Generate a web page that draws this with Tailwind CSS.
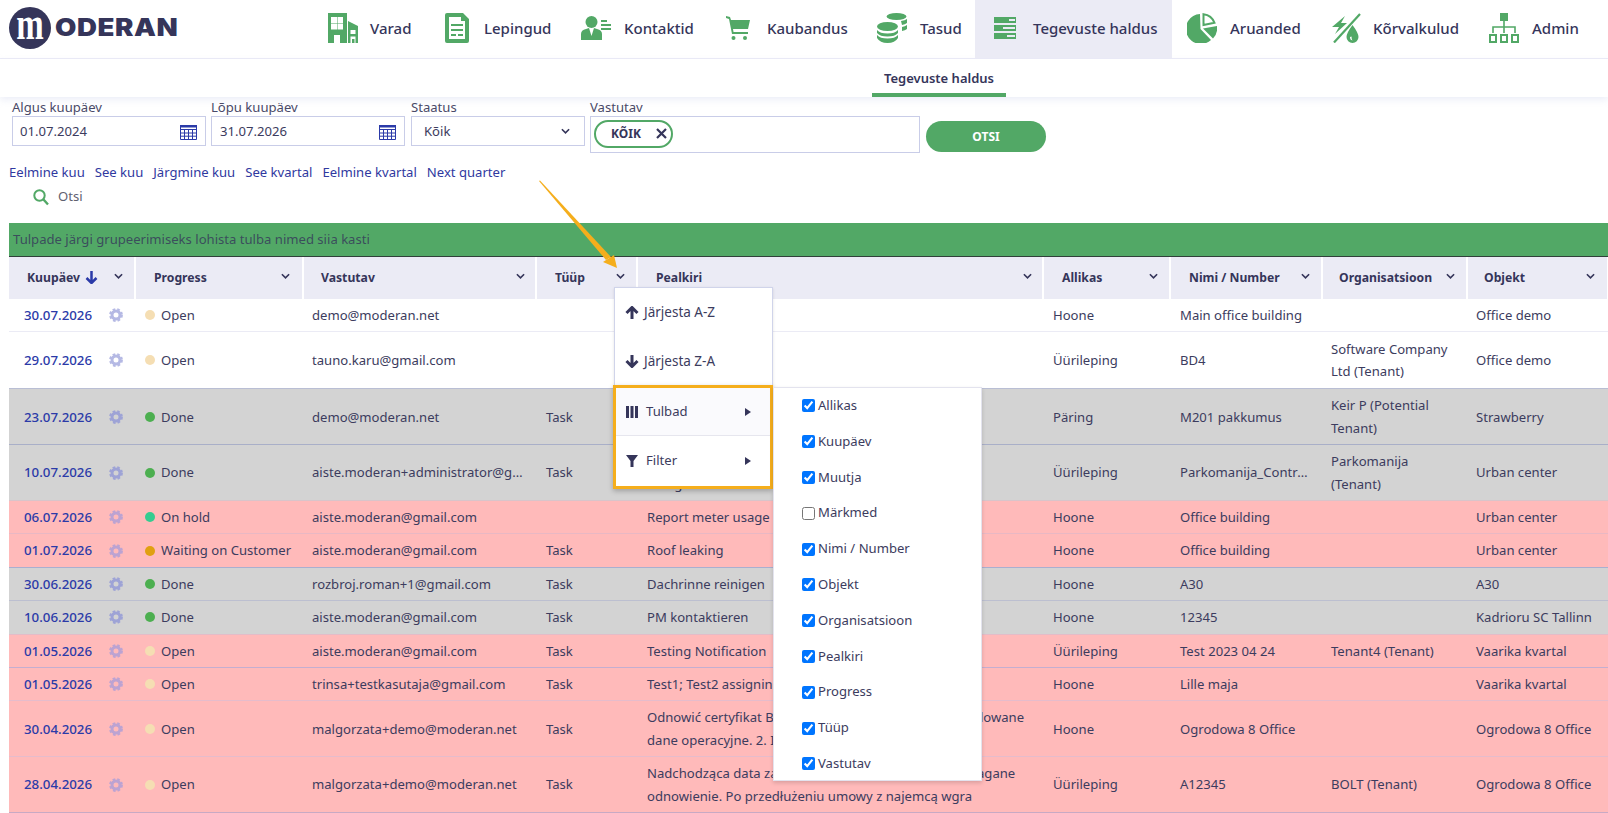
<!DOCTYPE html>
<html lang="et">
<head>
    <meta charset="UTF-8">
    <title>Moderan - Tegevuste haldus</title>
    <script src="https://cdn.jsdelivr.net/npm/@tailwindcss/browser@4"></script>
</head>
<body class="bg-white font-['Noto_Sans',sans-serif] text-[13.100px] text-[#3c3c5e]">
    <svg class="hidden">
        <symbol id="gear" viewBox="0 0 14 14">
            <circle cx="7" cy="7" r="4" fill="none" stroke="currentColor" stroke-width="3"/>
            <circle cx="7" cy="7" r="5.8" fill="none" stroke="currentColor" stroke-width="2.2" stroke-dasharray="2.6 2.05"/>
        </symbol>
        <symbol id="chev" viewBox="0 0 10 6">
            <path d="M1 1l4 4 4-4" fill="none" stroke="currentColor" stroke-width="1.8"/>
        </symbol>
        <symbol id="cal" viewBox="0 0 17 15">
            <path d="M.5.5h16v14H.5zM.5 4.5h16M.5 8h16M.5 11.2h16M4.5 4.5v10M8.5 4.5v10M12.5 4.5v10" fill="none" stroke="currentColor"/>
            <path d="M0 0h17v2.5H0z" fill="currentColor"/>
        </symbol>
        <symbol id="caret" viewBox="0 0 6 8"><path d="M0 0l6 4-6 4z" fill="currentColor"/></symbol>
    </svg>

    <div class="relative h-[813px] overflow-hidden">
        <!-- top nav -->
        <nav class="flex h-[59px] border-b border-[#ebebf7] pb-[2px] text-[15px] font-medium text-[#35355a]">
            <div class="flex w-[309px] items-center pl-[9px]">
                <div class="flex h-[42px] w-[42px] shrink-0 items-center justify-center rounded-full bg-[#35355a] font-['Liberation_Serif',serif] text-[33px] font-bold text-white">
                    <span class="-mt-[8px] scale-y-[1.4] leading-none">m</span>
                </div>
                <span class="ml-[4px] origin-left scale-x-[1.15] font-['Inter',sans-serif] text-[24px] font-black tracking-[0.5px]">ODERAN</span>
            </div>
            <a class="flex w-[117px] items-center pl-[19px]">
                <svg class="mr-[12px] shrink-0 text-[#52a866]" width="30" height="30" viewBox="0 0 30 30" fill="currentColor">
                    <path fill-rule="evenodd" d="M0 0h19v30h-7v-8H6v8H0zM3 4v6h6V4zm6.500 0v6H15V4zM3 10.500v6h6v-6zm6.500 0v6H15v-6z"/>
                    <path fill-rule="evenodd" d="M20 8l10 5v17H20zm2.500 9v4h5v-4zm0 6.500V30h1.500v-4h2.500v4h1v-6.500z"/>
                </svg>
                Varad
            </a>
            <a class="flex w-[136px] items-center pl-[19px]">
                <svg class="mr-[15px] shrink-0 text-[#52a866]" width="24" height="30" viewBox="0 0 24 30" fill="currentColor">
                    <path fill-rule="evenodd" d="M2 0h16l6 6v22a2 2 0 0 1-2 2H2a2 2 0 0 1-2-2V2a2 2 0 0 1 2-2zm2 4v22h16V8h-4V4z"/>
                    <path d="M6 11h12v2H6zM6 16h12v2H6zM6 21h5v2H6zM13 21h5v2h-5z"/>
                </svg>
                Lepingud
            </a>
            <a class="flex w-[145px] items-center pl-[19px]">
                <svg class="mr-[13px] shrink-0 text-[#52a866]" width="30" height="24" viewBox="0 0 30 24" fill="currentColor">
                    <circle cx="10.500" cy="6" r="6"/>
                    <path d="M0 24v-6q0-4 5-5l3-1 2.500 8 2.500-8 3 1q5 1 5 5v6z"/>
                    <path d="M20 4h6v2h-6zM20 8h10v2H20zM20 12h10v2H20z"/>
                </svg>
                Kontaktid
            </a>
            <a class="flex w-[151px] items-center pl-[19px]">
                <svg class="mr-[17px] shrink-0 text-[#52a866]" width="24" height="24" viewBox="0 0 24 24" fill="currentColor">
                    <path d="M0 0l4 1 1 3h19l-2 9H7l.5 3H22v2H6L3 3 0 2z"/>
                    <circle cx="7.500" cy="22" r="2"/><circle cx="19" cy="22" r="2"/>
                </svg>
                Kaubandus
            </a>
            <a class="flex w-[117px] items-center pl-[19px]">
                <svg class="mr-[13px] shrink-0 text-[#52a866]" width="30" height="30" viewBox="0 0 30 30" fill="currentColor">
                    <ellipse cx="19.500" cy="3.500" rx="10" ry="3.500"/>
                    <path d="M24 8q4-.5 6-2v4q-2 1.500-5 2zM25 14q3-.5 5-2v4q-2 1.500-5 2z"/>
                    <ellipse cx="10.500" cy="13.500" rx="10.500" ry="4.500"/>
                    <path d="M0 17q3 3.500 10.500 3.500T21 17v3q-3 3.500-10.500 3.500T0 20zM0 22q3 3.500 10.500 3.500T21 22v3q-3 5-10.500 5T0 25z"/>
                </svg>
                Tasud
            </a>
            <a class="flex h-[58px] w-[197px] items-center bg-[#ebebf5] pb-[2px] pl-[19px]">
                <svg class="mr-[17px] shrink-0 text-[#52a866]" width="22" height="22" viewBox="0 0 22 22" fill="currentColor">
                    <path fill-rule="evenodd" d="M0 0h22v6H0zm15 2v2h6V2zM0 8h22v6H0zm9 2v2h12v-2zM0 16h22v6H0zm13 2v2h8v-2z"/>
                </svg>
                Tegevuste haldus
            </a>
            <a class="flex w-[140px] items-center pl-[15px]">
                <svg class="mr-[13px] shrink-0 text-[#52a866]" width="30" height="30" viewBox="0 0 30 30" fill="currentColor">
                    <path d="M13 1A15 15 0 1 0 24 27L13.500 16z"/>
                    <path d="M16 15.500L30 13a15 15 0 0 1-4 12.500z"/>
                    <path d="M16.500 1.200A13.500 13.500 0 0 1 27.500 9.800L16.500 12z" fill="none" stroke="currentColor" stroke-width="2"/>
                </svg>
                Aruanded
            </a>
            <a class="flex w-[158px] items-center pl-[19px]">
                <svg class="mr-[12px] shrink-0 text-[#52a866]" width="30" height="30" viewBox="0 0 30 30" fill="currentColor">
                    <path d="M3 29.500L29 1" fill="none" stroke="currentColor" stroke-width="2.200"/>
                    <path d="M14 3L1 14h7l-4 7 12-11h-6z"/>
                    <path fill-rule="evenodd" d="M21.500 12q6 8 6 12a6 6 0 0 1-12 0q0-4 6-12zm-2.500 12q0 3 2.500 3.500-1-1-1-4z"/>
                </svg>
                Kõrvalkulud
            </a>
            <a class="flex items-center pl-[19px]">
                <svg class="mr-[13px] shrink-0 text-[#52a866]" width="30" height="30" viewBox="0 0 30 30" fill="currentColor">
                    <path d="M11 0h8v8h-8z"/>
                    <path d="M15 8v12M4 20v-6h22v6" fill="none" stroke="currentColor" stroke-width="1.600"/>
                    <path d="M1 22h6v7H1zM12 22h6v7h-6zM23 22h6v7h-6z" fill="none" stroke="currentColor" stroke-width="2"/>
                </svg>
                Admin
            </a>
        </nav>

        <!-- sub nav -->
        <div class="flex h-[38px] justify-center pl-[270px] shadow-[0_3px_7px_rgba(200,205,235,0.35)]">
            <a class="flex h-[38px] w-[134px] items-center justify-center border-b-[4px] border-[#52a866] pt-[5px] text-[13px] font-semibold text-[#35355a]">Tegevuste haldus</a>
        </div>

        <!-- filters -->
        <div class="relative flex items-start pl-[12px] pt-[1px]">
            <div class="mr-[5px] w-[194px]">
                <label class="block h-[18px] leading-[18px] text-[#4a4a68]">Algus kuupäev</label>
                <div class="flex h-[30px] items-center justify-between border border-[#c9cde8] pl-[7px] pr-[8px] pt-[2px]">
                    01.07.2024
                    <svg class="text-[#2b3aa8]" width="17" height="15"><use href="#cal"/></svg>
                </div>
            </div>
            <div class="mr-[6px] w-[194px]">
                <label class="block h-[18px] leading-[18px] text-[#4a4a68]">Lõpu kuupäev</label>
                <div class="flex h-[30px] items-center justify-between border border-[#c9cde8] pl-[8px] pr-[8px] pt-[2px]">
                    31.07.2026
                    <svg class="text-[#2b3aa8]" width="17" height="15"><use href="#cal"/></svg>
                </div>
            </div>
            <div class="mr-[5px] w-[174px]">
                <label class="block h-[18px] leading-[18px] text-[#4a4a68]">Staatus</label>
                <div class="flex h-[30px] items-center justify-between border border-[#c9cde8] pl-[12px] pr-[14px] pt-[2px]">
                    Kõik
                    <svg class="-mt-[3px] text-[#35355a]" width="9" height="6"><use href="#chev"/></svg>
                </div>
            </div>
            <div class="mr-[6px] w-[330px]">
                <label class="block h-[18px] leading-[18px] text-[#4a4a68]">Vastutav</label>
                <div class="flex h-[37px] items-start border border-[#c9cde8] pl-[3px] pt-[3px]">
                    <span class="flex h-[28px] w-[79px] items-center rounded-full border-2 border-[#52a866] pl-[15px] text-[12px] font-bold text-[#35355a]">
                        KÕIK
                        <svg class="-mt-[2px] ml-[15px]" width="11" height="11" viewBox="0 0 11 11"><path d="M1 1l9 9M10 1l-9 9" stroke="currentColor" stroke-width="2.200"/></svg>
                    </span>
                </div>
            </div>
            <button class="mt-[23px] flex h-[31px] w-[120px] items-center justify-center rounded-full bg-[#52a866] text-[12px] font-bold text-white">OTSI</button>
        </div>

        <div class="mt-[10px] flex h-[20px] items-center gap-[10px] pl-[9px] text-[#3039a0]">
            <a>Eelmine kuu</a><a>See kuu</a><a>Järgmine kuu</a><a>See kvartal</a><a>Eelmine kvartal</a><a>Next quarter</a>
        </div>
        <div class="mt-[4px] flex h-[20px] items-center pl-[33px] text-[#5f5f70]">
            <svg class="mr-[9px] text-[#52a866]" width="16" height="17" viewBox="0 0 16 17" fill="none" stroke="currentColor"><circle cx="6.500" cy="6.500" r="5.200" stroke-width="2"/><path d="M10.500 10.500l4.500 5" stroke-width="2.400"/></svg>
            Otsi
        </div>

        <!-- group bar -->
        <div class="ml-[9px] mt-[16px] flex h-[34px] items-center border-b border-[#30403a] bg-[#52a866] pl-[4px] text-[#35355a]/80">
            Tulpade järgi grupeerimiseks lohista tulba nimed siia kasti
        </div>

        <!-- grid -->
        <table class="ml-[9px] w-[1599px] table-fixed">
            <colgroup>
                <col class="w-[126px]"><col class="w-[168px]"><col class="w-[233px]"><col class="w-[101px]"><col class="w-[406px]"><col class="w-[127px]"><col class="w-[152px]"><col class="w-[145px]"><col class="w-[141px]">
            </colgroup>
            <thead class="text-[12.200px] font-bold text-[#35355a]">
                <tr class="h-[42px] bg-[#ebebf5]">
                    <th class="border-r-2 border-white pl-[18px] text-left">
                        <div class="flex items-center">Kuupäev
                            <svg class="ml-[5px] text-[#2b3aa8]" width="13" height="13" viewBox="0 0 13 13" fill="none" stroke="currentColor" stroke-width="2.500"><path d="M6.500 0v12M1.500 7l5 5 5-5"/></svg>
                            <svg class="-mt-[3px] ml-[16px]" width="9" height="6"><use href="#chev"/></svg>
                        </div>
                    </th>
                    <th class="border-r-2 border-white pl-[18px] pr-[12px] text-left"><div class="flex items-center justify-between">Progress<svg class="-mt-[3px]" width="9" height="6"><use href="#chev"/></svg></div></th>
                    <th class="border-r-2 border-white pl-[17px] pr-[10px] text-left"><div class="flex items-center justify-between">Vastutav<svg class="-mt-[3px]" width="9" height="6"><use href="#chev"/></svg></div></th>
                    <th class="border-r-2 border-white pl-[18px] pr-[11px] text-left"><div class="flex items-center justify-between">Tüüp<svg class="-mt-[3px]" width="9" height="6"><use href="#chev"/></svg></div></th>
                    <th class="border-r-2 border-white pl-[18px] pr-[10px] text-left"><div class="flex items-center justify-between">Pealkiri<svg class="-mt-[3px]" width="9" height="6"><use href="#chev"/></svg></div></th>
                    <th class="border-r-2 border-white pl-[18px] pr-[11px] text-left"><div class="flex items-center justify-between">Allikas<svg class="-mt-[3px]" width="9" height="6"><use href="#chev"/></svg></div></th>
                    <th class="border-r-2 border-white pl-[18px] pr-[11px] text-left"><div class="flex items-center justify-between">Nimi / Number<svg class="-mt-[3px]" width="9" height="6"><use href="#chev"/></svg></div></th>
                    <th class="border-r-2 border-white pl-[16px] pr-[11px] text-left"><div class="flex items-center justify-between">Organisatsioon<svg class="-mt-[3px]" width="9" height="6"><use href="#chev"/></svg></div></th>
                    <th class="border-r-2 border-white pl-[16px] pr-[12px] text-left"><div class="flex items-center justify-between">Objekt<svg class="-mt-[3px]" width="9" height="6"><use href="#chev"/></svg></div></th>
                </tr>
            </thead>
            <tbody class="leading-[22.400px] [&_td]:truncate [&_td]:py-[5px] [&_td]:pl-[10px] [&_td]:pr-[10px] [&_td:first-child]:pr-[12px] [&_td:nth-child(8)]:pl-[9px] [&_td:nth-child(9)]:pl-[9px]">
                <tr class="border-b border-[#ebebf5] bg-white">
                    <td class="!pl-[15px]"><div class="flex items-center justify-between text-[13.300px] font-medium text-[#2b3aa8]">30.07.2026<svg class="text-[#b5b9e4]" width="14" height="14"><use href="#gear"/></svg></div></td>
                    <td><div class="flex items-center"><span class="mr-[6px] h-[10px] w-[10px] rounded-full bg-[#f5deb3]"></span>Open</div></td>
                    <td class="!pl-[9px]">demo@moderan.net</td><td></td><td>Test</td><td>Hoone</td><td>Main office building</td><td></td><td>Office demo</td>
                </tr>
                <tr class="h-[57px] border-b border-[#b9bed4] bg-white">
                    <td class="!pl-[15px]"><div class="flex items-center justify-between text-[13.300px] font-medium text-[#2b3aa8]">29.07.2026<svg class="text-[#b5b9e4]" width="14" height="14"><use href="#gear"/></svg></div></td>
                    <td><div class="flex items-center"><span class="mr-[6px] h-[10px] w-[10px] rounded-full bg-[#f5deb3]"></span>Open</div></td>
                    <td class="!pl-[9px]">tauno.karu@gmail.com</td><td></td><td>Lease</td><td>Üürileping</td><td>BD4</td><td class="!whitespace-normal">Software Company Ltd (Tenant)</td><td>Office demo</td>
                </tr>
                <tr class="border-b border-[#a9afc8] bg-[#d3d3d3]">
                    <td class="!pl-[15px]"><div class="flex items-center justify-between text-[13.300px] font-medium text-[#2b3aa8]">23.07.2026<svg class="text-[#9ea3d6]" width="14" height="14"><use href="#gear"/></svg></div></td>
                    <td><div class="flex items-center"><span class="mr-[6px] h-[10px] w-[10px] rounded-full bg-[#4caf50]"></span>Done</div></td>
                    <td class="!pl-[9px]">demo@moderan.net</td><td>Task</td><td>M201</td><td>Päring</td><td>M201 pakkumus</td><td class="!whitespace-normal">Keir P (Potential Tenant)</td><td>Strawberry</td>
                </tr>
                <tr class="border-b border-[#d9c4ca] bg-[#d3d3d3]">
                    <td class="!pl-[15px]"><div class="flex items-center justify-between text-[13.300px] font-medium text-[#2b3aa8]">10.07.2026<svg class="text-[#9ea3d6]" width="14" height="14"><use href="#gear"/></svg></div></td>
                    <td><div class="flex items-center"><span class="mr-[6px] h-[10px] w-[10px] rounded-full bg-[#4caf50]"></span>Done</div></td>
                    <td class="!pl-[9px]">aiste.moderan+administrator@gmail.com</td><td>Task</td><td class="!whitespace-normal">Contract<br>Using</td><td>Üürileping</td><td class="!pr-[14px]">Parkomanija_Contract</td><td class="!whitespace-normal">Parkomanija (Tenant)</td><td>Urban center</td>
                </tr>
                <tr class="border-b border-[#e8b8c4] bg-[#ffbaba]">
                    <td class="!pl-[15px]"><div class="flex items-center justify-between text-[13.300px] font-medium text-[#2b3aa8]">06.07.2026<svg class="text-[#bca3d2]" width="14" height="14"><use href="#gear"/></svg></div></td>
                    <td><div class="flex items-center"><span class="mr-[6px] h-[10px] w-[10px] rounded-full bg-[#35cc90]"></span>On hold</div></td>
                    <td class="!pl-[9px]">aiste.moderan@gmail.com</td><td></td><td>Report meter usage</td><td>Hoone</td><td>Office building</td><td></td><td>Urban center</td>
                </tr>
                <tr class="border-b border-[#a9afd0] bg-[#ffbaba]">
                    <td class="!pl-[15px]"><div class="flex items-center justify-between text-[13.300px] font-medium text-[#2b3aa8]">01.07.2026<svg class="text-[#bca3d2]" width="14" height="14"><use href="#gear"/></svg></div></td>
                    <td><div class="flex items-center whitespace-nowrap"><span class="mr-[6px] h-[10px] w-[10px] shrink-0 rounded-full bg-[#e0a010]"></span>Waiting on Customer</div></td>
                    <td class="!pl-[9px]">aiste.moderan@gmail.com</td><td>Task</td><td>Roof leaking</td><td>Hoone</td><td>Office building</td><td></td><td>Urban center</td>
                </tr>
                <tr class="border-b border-[#bcbfd0] bg-[#d3d3d3]">
                    <td class="!pl-[15px]"><div class="flex items-center justify-between text-[13.300px] font-medium text-[#2b3aa8]">30.06.2026<svg class="text-[#9ea3d6]" width="14" height="14"><use href="#gear"/></svg></div></td>
                    <td><div class="flex items-center"><span class="mr-[6px] h-[10px] w-[10px] rounded-full bg-[#4caf50]"></span>Done</div></td>
                    <td class="!pl-[9px]">rozbroj.roman+1@gmail.com</td><td>Task</td><td>Dachrinne reinigen</td><td>Hoone</td><td>A30</td><td></td><td>A30</td>
                </tr>
                <tr class="border-b border-[#e3bcc8] bg-[#d3d3d3]">
                    <td class="!pl-[15px]"><div class="flex items-center justify-between text-[13.300px] font-medium text-[#2b3aa8]">10.06.2026<svg class="text-[#9ea3d6]" width="14" height="14"><use href="#gear"/></svg></div></td>
                    <td><div class="flex items-center"><span class="mr-[6px] h-[10px] w-[10px] rounded-full bg-[#4caf50]"></span>Done</div></td>
                    <td class="!pl-[9px]">aiste.moderan@gmail.com</td><td>Task</td><td>PM kontaktieren</td><td>Hoone</td><td>12345</td><td></td><td>Kadrioru SC Tallinn</td>
                </tr>
                <tr class="border-b border-[#c4aed0] bg-[#ffbaba]">
                    <td class="!pl-[15px]"><div class="flex items-center justify-between text-[13.300px] font-medium text-[#2b3aa8]">01.05.2026<svg class="text-[#bca3d2]" width="14" height="14"><use href="#gear"/></svg></div></td>
                    <td><div class="flex items-center"><span class="mr-[6px] h-[10px] w-[10px] rounded-full bg-[#f5deb3]"></span>Open</div></td>
                    <td class="!pl-[9px]">aiste.moderan@gmail.com</td><td>Task</td><td>Testing Notification</td><td>Üürileping</td><td>Test 2023 04 24</td><td>Tenant4 (Tenant)</td><td>Vaarika kvartal</td>
                </tr>
                <tr class="border-b border-[#e5bccc] bg-[#ffbaba]">
                    <td class="!pl-[15px]"><div class="flex items-center justify-between text-[13.300px] font-medium text-[#2b3aa8]">01.05.2026<svg class="text-[#bca3d2]" width="14" height="14"><use href="#gear"/></svg></div></td>
                    <td><div class="flex items-center"><span class="mr-[6px] h-[10px] w-[10px] rounded-full bg-[#f5deb3]"></span>Open</div></td>
                    <td class="!pl-[9px]">trinsa+testkasutaja@gmail.com</td><td>Task</td><td>Test1; Test2 assigning</td><td>Hoone</td><td>Lille maja</td><td></td><td>Vaarika kvartal</td>
                </tr>
                <tr class="border-b border-[#e5bccc] bg-[#ffbaba]">
                    <td class="!pl-[15px]"><div class="flex items-center justify-between text-[13.300px] font-medium text-[#2b3aa8]">30.04.2026<svg class="text-[#bca3d2]" width="14" height="14"><use href="#gear"/></svg></div></td>
                    <td><div class="flex items-center"><span class="mr-[6px] h-[10px] w-[10px] rounded-full bg-[#f5deb3]"></span>Open</div></td>
                    <td class="!pl-[9px]">malgorzata+demo@moderan.net</td><td>Task</td><td>Odnowić certyfikat BMS. 1. Utracone zostaną też zakodowane<br>dane operacyjne. 2. Inne</td><td>Hoone</td><td>Ogrodowa 8 Office</td><td></td><td>Ogrodowa 8 Office</td>
                </tr>
                <tr class="border-b border-[#c8a9c4] bg-[#ffbaba]">
                    <td class="!pl-[15px]"><div class="flex items-center justify-between text-[13.300px] font-medium text-[#2b3aa8]">28.04.2026<svg class="text-[#bca3d2]" width="14" height="14"><use href="#gear"/></svg></div></td>
                    <td><div class="flex items-center"><span class="mr-[6px] h-[10px] w-[10px] rounded-full bg-[#f5deb3]"></span>Open</div></td>
                    <td class="!pl-[9px]">malgorzata+demo@moderan.net</td><td>Task</td><td>Nadchodząca data zakończenia obecnej umowy. Wymagane<br>odnowienie. Po przedłużeniu umowy z najemcą wgra</td><td>Üürileping</td><td>A12345</td><td>BOLT (Tenant)</td><td>Ogrodowa 8 Office</td>
                </tr>
            </tbody>
        </table>

        <!-- annotation arrow -->
        <svg class="absolute left-[530px] top-[175px] z-30" width="100" height="100" viewBox="0 0 100 100" fill="#f5ae1c">
            <path d="M9 6l1-.6L81 82l-5 3z"/>
            <path d="M73 87l11-7 3 13z"/>
        </svg>

        <!-- column menu -->
        <div class="absolute left-[614px] top-[287px] z-10 h-[100px] w-[159px] border border-[#d0d4ea] bg-white text-[13.500px] shadow-sm">
            <div class="flex h-[49px] items-center pl-[10px]">
                <svg class="mr-[5px]" width="14" height="13" viewBox="0 0 14 13" fill="none" stroke="#35355a" stroke-width="3"><path d="M7 13V2M1.500 7L7 1.500 12.500 7"/></svg>
                Järjesta A-Z
            </div>
            <div class="flex h-[49px] items-center pl-[10px]">
                <svg class="mr-[5px]" width="14" height="13" viewBox="0 0 14 13" fill="none" stroke="#35355a" stroke-width="3"><path d="M7 0v11M1.500 6L7 11.500 12.500 6"/></svg>
                Järjesta Z-A
            </div>
        </div>
        <div class="absolute left-[613px] top-[385px] z-20 w-[160px] border-[3px] border-[#f5ae1c] bg-white shadow-[0_2px_5px_rgba(0,0,0,0.25)]">
            <div class="flex h-[48px] items-center border-b border-[#e6e6ee] bg-[#fafafd] pl-[10px] pr-[19px]">
                <svg class="mr-[8px]" width="12" height="12" viewBox="0 0 12 12" fill="#35355a"><path d="M0 0h3v12H0zM4.500 0h3v12h-3zM9 0h3v12H9z"/></svg>
                <span class="flex-1">Tulbad</span>
                <svg class="text-[#35355a]" width="6" height="8"><use href="#caret"/></svg>
            </div>
            <div class="flex h-[50px] items-center pl-[10px] pr-[19px]">
                <svg class="mr-[8px]" width="12" height="12" viewBox="0 0 12 12" fill="#35355a"><path d="M0 0h12L7.500 6v6h-3V6z"/></svg>
                <span class="flex-1">Filter</span>
                <svg class="text-[#35355a]" width="6" height="8"><use href="#caret"/></svg>
            </div>
        </div>
        <div class="absolute left-[773px] top-[387px] z-20 flex h-[394px] w-[209px] flex-col overflow-hidden border border-[#e3e3ee] bg-white pl-[28px] shadow-[0_2px_4px_rgba(0,0,0,0.15)]">
            <label class="flex h-[35.800px] shrink-0 items-center gap-[3px]"><input type="checkbox" checked class="accent-[#0075ff]">Allikas</label>
            <label class="flex h-[35.800px] shrink-0 items-center gap-[3px]"><input type="checkbox" checked class="accent-[#0075ff]">Kuupäev</label>
            <label class="flex h-[35.800px] shrink-0 items-center gap-[3px]"><input type="checkbox" checked class="accent-[#0075ff]">Muutja</label>
            <label class="flex h-[35.800px] shrink-0 items-center gap-[3px]"><input type="checkbox" class="accent-[#0075ff]">Märkmed</label>
            <label class="flex h-[35.800px] shrink-0 items-center gap-[3px]"><input type="checkbox" checked class="accent-[#0075ff]">Nimi / Number</label>
            <label class="flex h-[35.800px] shrink-0 items-center gap-[3px]"><input type="checkbox" checked class="accent-[#0075ff]">Objekt</label>
            <label class="flex h-[35.800px] shrink-0 items-center gap-[3px]"><input type="checkbox" checked class="accent-[#0075ff]">Organisatsioon</label>
            <label class="flex h-[35.800px] shrink-0 items-center gap-[3px]"><input type="checkbox" checked class="accent-[#0075ff]">Pealkiri</label>
            <label class="flex h-[35.800px] shrink-0 items-center gap-[3px]"><input type="checkbox" checked class="accent-[#0075ff]">Progress</label>
            <label class="flex h-[35.800px] shrink-0 items-center gap-[3px]"><input type="checkbox" checked class="accent-[#0075ff]">Tüüp</label>
            <label class="flex h-[35.800px] shrink-0 items-center gap-[3px]"><input type="checkbox" checked class="accent-[#0075ff]">Vastutav</label>
        </div>
    </div>
</body>
</html>
